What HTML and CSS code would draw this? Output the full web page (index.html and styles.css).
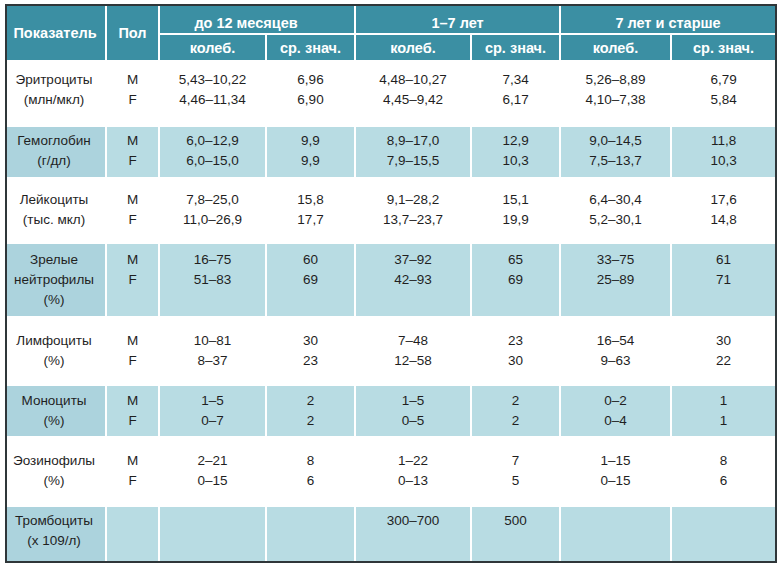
FILE: index.html
```html
<!DOCTYPE html>
<html lang="ru">
<head>
<meta charset="utf-8">
<title>Показатели крови</title>
<link rel="stylesheet" href="styles.css">
</head>
<body>
<div class="wrap">
<table class="tbl">
  <colgroup>
    <col class="w1"><col class="w2"><col class="w3"><col class="w4"><col class="w5"><col class="w6"><col class="w7"><col class="w8">
  </colgroup>
  <thead>
    <tr class="h1">
      <th rowspan="2" class="hl">Показатель</th>
      <th rowspan="2">Пол</th>
      <th colspan="2" class="grp g1">до 12 месяцев</th>
      <th colspan="2" class="grp">1–7 лет</th>
      <th colspan="2" class="grp last">7 лет и старше</th>
    </tr>
    <tr class="h2">
      <th>колеб.</th>
      <th>ср. знач.</th>
      <th>колеб.</th>
      <th>ср. знач.</th>
      <th>колеб.</th>
      <th class="last">ср. знач.</th>
    </tr>
  </thead>
  <tbody>
    <tr class="r r1 white">
      <td class="lbl">Эритроциты<br>(млн/мкл)</td>
      <td>M<br>F</td>
      <td>5,43–10,22<br>4,46–11,34</td>
      <td>6,96<br>6,90</td>
      <td>4,48–10,27<br>4,45–9,42</td>
      <td>7,34<br>6,17</td>
      <td>5,26–8,89<br>4,10–7,38</td>
      <td class="last">6,79<br>5,84</td>
    </tr>
    <tr class="r r2 blue">
      <td class="lbl">Гемоглобин<br>(г/дл)</td>
      <td>M<br>F</td>
      <td>6,0–12,9<br>6,0–15,0</td>
      <td>9,9<br>9,9</td>
      <td>8,9–17,0<br>7,9–15,5</td>
      <td>12,9<br>10,3</td>
      <td>9,0–14,5<br>7,5–13,7</td>
      <td class="last">11,8<br>10,3</td>
    </tr>
    <tr class="r r3 white">
      <td class="lbl">Лейкоциты<br>(тыс. мкл)</td>
      <td>M<br>F</td>
      <td>7,8–25,0<br>11,0–26,9</td>
      <td>15,8<br>17,7</td>
      <td>9,1–28,2<br>13,7–23,7</td>
      <td>15,1<br>19,9</td>
      <td>6,4–30,4<br>5,2–30,1</td>
      <td class="last">17,6<br>14,8</td>
    </tr>
    <tr class="r r4 blue">
      <td class="lbl">Зрелые<br>нейтрофилы<br>(%)</td>
      <td>M<br>F</td>
      <td>16–75<br>51–83</td>
      <td>60<br>69</td>
      <td>37–92<br>42–93</td>
      <td>65<br>69</td>
      <td>33–75<br>25–89</td>
      <td class="last">61<br>71</td>
    </tr>
    <tr class="r r5 white">
      <td class="lbl">Лимфоциты<br>(%)</td>
      <td>M<br>F</td>
      <td>10–81<br>8–37</td>
      <td>30<br>23</td>
      <td>7–48<br>12–58</td>
      <td>23<br>30</td>
      <td>16–54<br>9–63</td>
      <td class="last">30<br>22</td>
    </tr>
    <tr class="r r6 blue">
      <td class="lbl">Моноциты<br>(%)</td>
      <td>M<br>F</td>
      <td>1–5<br>0–7</td>
      <td>2<br>2</td>
      <td>1–5<br>0–5</td>
      <td>2<br>2</td>
      <td>0–2<br>0–4</td>
      <td class="last">1<br>1</td>
    </tr>
    <tr class="r r7 white">
      <td class="lbl">Эозинофилы<br>(%)</td>
      <td>M<br>F</td>
      <td>2–21<br>0–15</td>
      <td>8<br>6</td>
      <td>1–22<br>0–13</td>
      <td>7<br>5</td>
      <td>1–15<br>0–15</td>
      <td class="last">8<br>6</td>
    </tr>
    <tr class="r r8 blue">
      <td class="lbl">Тромбоциты<br>(x 109/л)</td>
      <td></td>
      <td></td>
      <td></td>
      <td>300–700</td>
      <td>500</td>
      <td></td>
      <td class="last"></td>
    </tr>
  </tbody>
</table>
</div>
</body>
</html>
```

FILE: styles.css
```css
html, body {
  margin: 0;
  padding: 0;
  background: #ffffff;
}

.wrap {
  padding: 4px 0 0 5px;
}

.tbl {
  width: 772px;
  table-layout: fixed;
  border-collapse: separate;
  border-spacing: 0;
  border: 2px solid #2f3639;
  font-family: "Liberation Sans", Arial, sans-serif;
  font-size: 13.5px;
  color: #1f1f1f;
}

.w1 { width: 100px; }
.w2 { width: 53px; }
.w3 { width: 107px; }
.w4 { width: 89px; }
.w5 { width: 116px; }
.w6 { width: 89px; }
.w7 { width: 111px; }
.w8 { width: 103px; }

.tbl th,
.tbl td {
  padding: 0;
  text-align: center;
  border-right: 2px solid #ffffff;
}

.tbl .last {
  border-right: none;
}

.tbl th {
  background: #3b8fa3;
  color: #ffffff;
  font-weight: bold;
  font-size: 14.5px;
  line-height: 20px;
  vertical-align: middle;
}

.tbl .h1 {
  height: 29px;
}

.tbl .h2 {
  height: 25px;
}

.tbl .grp {
  vertical-align: top;
  padding-top: 7px;
  border-bottom: 2px solid #ffffff;
}

.tbl .g1 {
  padding-right: 22px;
}

.tbl .hl {
  padding-right: 2px;
}

.tbl td {
  vertical-align: top;
  line-height: 20px;
}

.tbl td.lbl {
  padding-right: 4px;
}

.white td {
  background: #ffffff;
}

.blue td {
  background: #b8dce3;
}

.blue td.lbl {
  background: #acd3dd;
}

.r1 { height: 67px; }
.r2 { height: 50px; }
.r3 { height: 67px; }
.r4 { height: 72px; }
.r5 { height: 70px; }
.r6 { height: 50px; }
.r7 { height: 71px; }
.r8 { height: 54px; }

.r1 td { padding-top: 10px; }
.r2 td { padding-top: 4px; }
.r3 td { padding-top: 13px; }
.r4 td { padding-top: 6px; }
.r5 td { padding-top: 15px; }
.r6 td { padding-top: 5px; }
.r7 td { padding-top: 15px; }
.r8 td { padding-top: 4px; }
```
